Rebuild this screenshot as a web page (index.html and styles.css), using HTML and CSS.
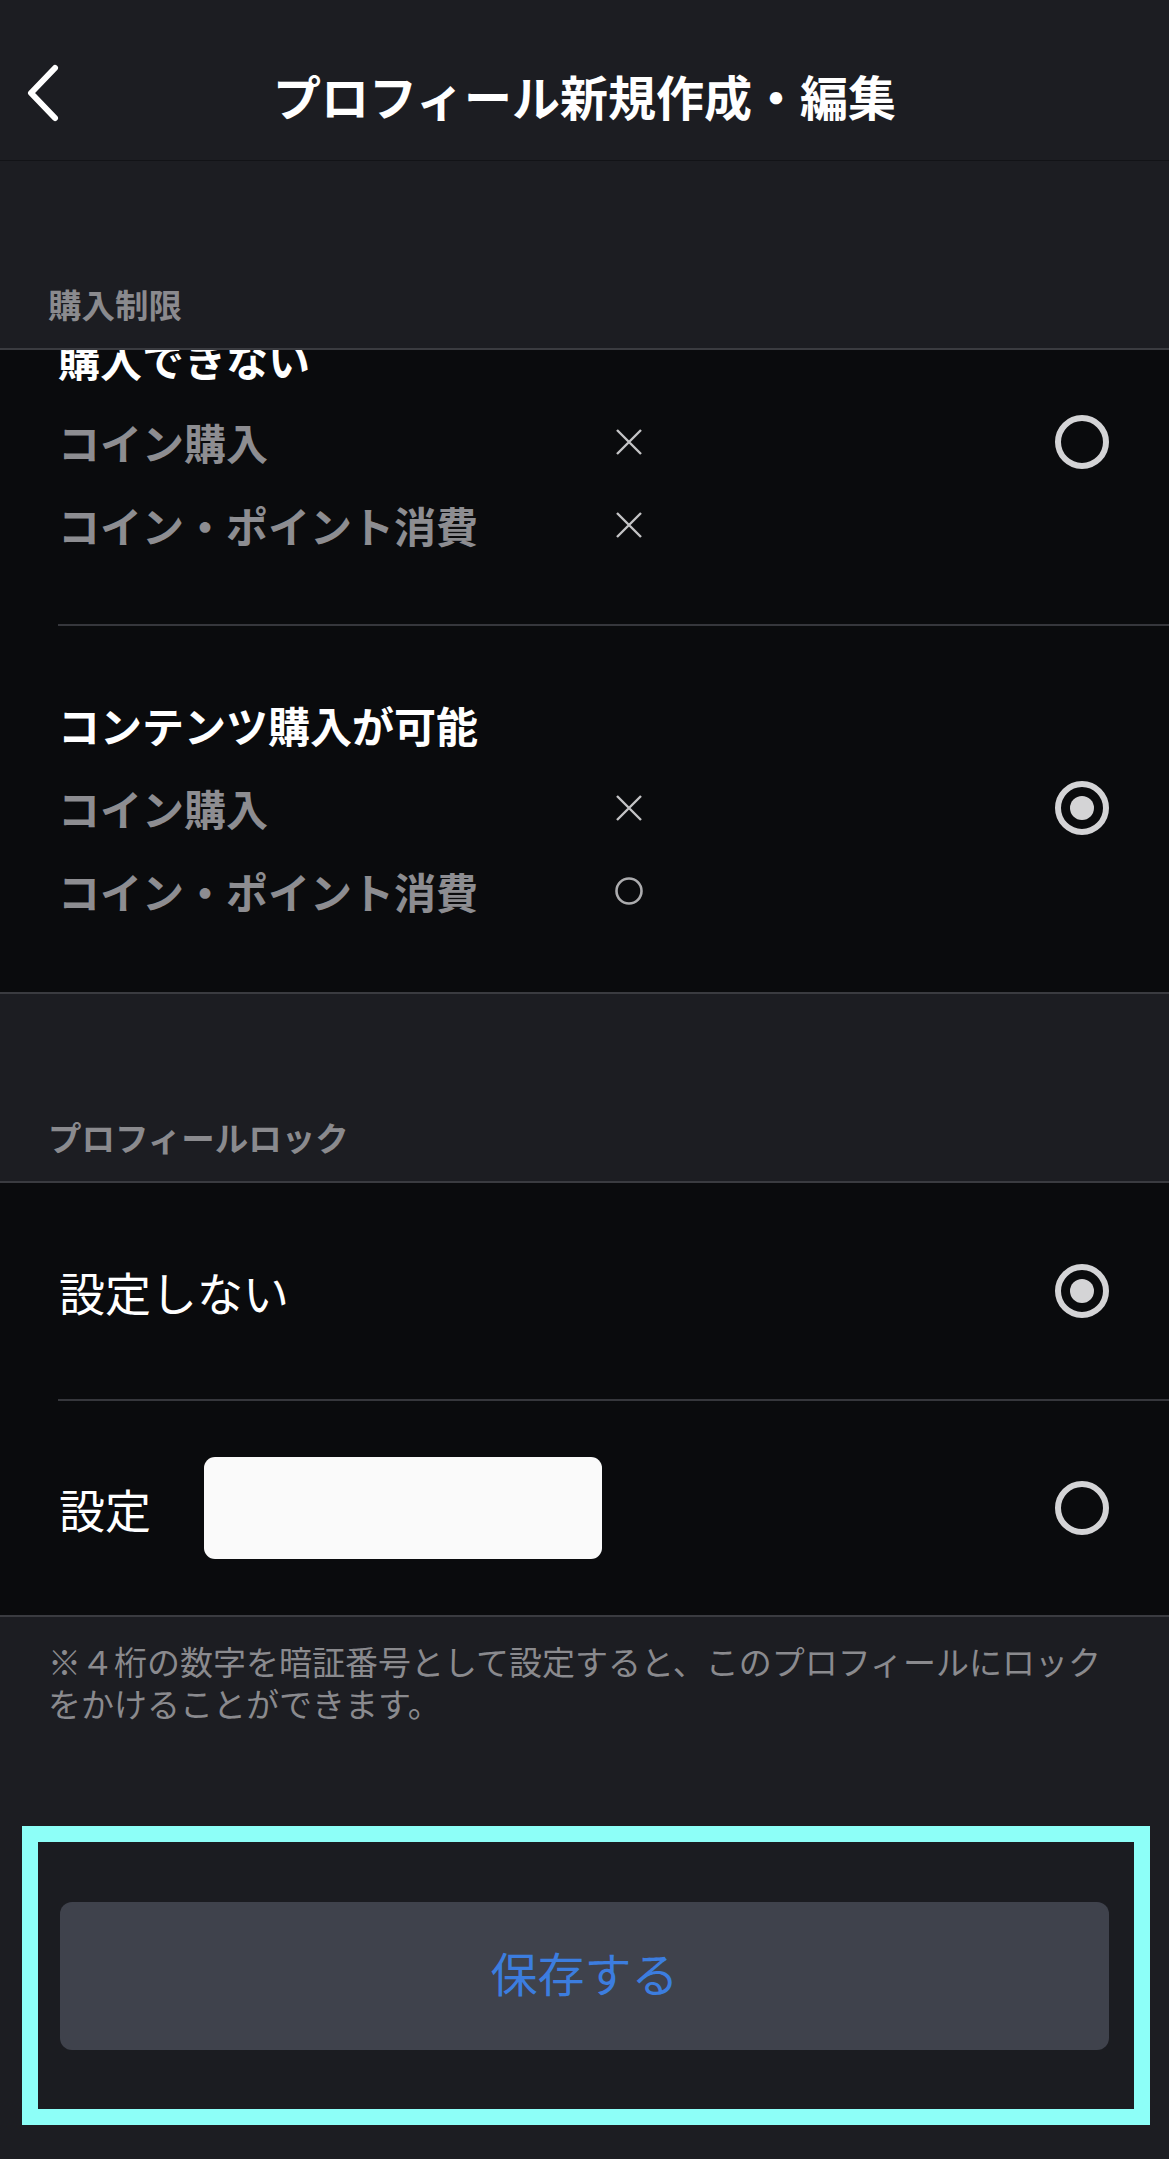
FILE: index.html
```html
<!DOCTYPE html>
<html lang="ja">
<head>
<meta charset="utf-8">
<title>プロフィール新規作成・編集</title>
<link rel="stylesheet" href="styles.css">
</head>
<body>
<header class="topbar">
  <div class="back">
    <svg width="40" height="64" viewBox="0 0 40 64" aria-hidden="true">
      <polyline points="29,5 5,30 29,55" fill="none" stroke="#ffffff" stroke-width="6" stroke-linecap="round" stroke-linejoin="round"/>
    </svg>
  </div>
  <h1 class="title">プロフィール新規作成・編集</h1>
  <div class="spacer"></div>
</header>

<div class="section-label">購入制限</div>
<section class="panel panel-purchase">
  <div class="option option-first">
    <div class="option-body">
      <div class="option-title">購入できない</div>
      <div class="perm-row"><span class="perm-label">コイン購入</span><span class="perm-mark"><svg class="mark" viewBox="0 0 28 28"><path d="M2 2 L26 26 M26 2 L2 26" stroke="#c4c4c6" stroke-width="2.4" fill="none"/></svg></span></div>
      <div class="perm-row"><span class="perm-label">コイン・ポイント消費</span><span class="perm-mark"><svg class="mark" viewBox="0 0 28 28"><path d="M2 2 L26 26 M26 2 L2 26" stroke="#c4c4c6" stroke-width="2.4" fill="none"/></svg></span></div>
    </div>
    <span class="radio"></span>
  </div>
  <div class="divider"></div>
  <div class="option option-second">
    <div class="option-body">
      <div class="option-title">コンテンツ購入が可能</div>
      <div class="perm-row"><span class="perm-label">コイン購入</span><span class="perm-mark"><svg class="mark" viewBox="0 0 28 28"><path d="M2 2 L26 26 M26 2 L2 26" stroke="#c4c4c6" stroke-width="2.4" fill="none"/></svg></span></div>
      <div class="perm-row"><span class="perm-label">コイン・ポイント消費</span><span class="perm-mark"><svg class="mark" viewBox="0 0 28 28"><circle cx="14" cy="14" r="12.5" stroke="#acacae" stroke-width="2.6" fill="none"/></svg></span></div>
    </div>
    <span class="radio radio-on"></span>
  </div>
</section>

<div class="section-label">プロフィールロック</div>
<section class="panel">
  <div class="lock-row lock-row-first">
    <span class="lock-label">設定しない</span>
    <span class="radio radio-on"></span>
  </div>
  <div class="divider"></div>
  <div class="lock-row">
    <span class="lock-label lock-label-short">設定</span>
    <span class="pin-input"></span>
    <span class="radio"></span>
  </div>
</section>

<p class="note">※４桁の数字を暗証番号として設定すると、このプロフィールにロック<br>をかけることができます。</p>

<div class="footer">
  <button class="save" type="button">保存する</button>
</div>
</body>
</html>
```

FILE: styles.css
```css
* {
  box-sizing: border-box;
}

html, body {
  margin: 0;
  padding: 0;
}

body {
  background: #1c1d22;
  font-family: "Noto Sans CJK JP", "Noto Sans", sans-serif;
  color: #ffffff;
  width: 1169px;
}

.topbar {
  height: 161px;
  padding-top: 30px;
  display: grid;
  grid-template-columns: 110px 1fr 110px;
  align-items: center;
  border-bottom: 1px solid #121317;
}

.back {
  display: flex;
  align-items: center;
  padding-left: 26px;
  height: 130px;
}

.back svg {
  display: block;
}

.title {
  margin: 0;
  text-align: center;
  font-size: 48px;
  font-weight: 700;
  line-height: 130px;
  letter-spacing: 0;
  color: #ffffff;
}

.section-label {
  height: 187px;
  display: flex;
  align-items: flex-end;
  padding: 0 48px 27px;
  font-size: 33.5px;
  font-weight: 700;
  line-height: 34px;
  color: #8a8a8e;
}

.panel {
  background: #0a0b0d;
  border-top: 2px solid #3a3b40;
  border-bottom: 2px solid #3a3b40;
  overflow: hidden;
}

.option {
  display: flex;
  align-items: center;
  padding: 57px 60px 58px 58px;
}

.option-first {
  margin-top: -90px;
}

.option-second {
  padding-bottom: 60px;
}

.option-body {
  flex: 1;
}

.option-title {
  font-size: 42px;
  font-weight: 700;
  line-height: 83px;
  color: #ffffff;
}

.perm-row {
  display: flex;
  align-items: center;
  height: 83px;
}

.perm-label {
  width: 557px;
  font-size: 42px;
  font-weight: 700;
  color: #8d8d91;
}

.perm-mark {
  display: flex;
  align-items: center;
}

.mark {
  width: 28px;
  height: 28px;
  display: block;
}

.divider {
  height: 2px;
  margin-left: 58px;
  background: #36373c;
}

.radio {
  width: 54px;
  height: 54px;
  border-radius: 50%;
  border: 6px solid #d4d4d6;
  flex: none;
  display: flex;
  align-items: center;
  justify-content: center;
}

.radio-on::after {
  content: "";
  width: 24px;
  height: 24px;
  border-radius: 50%;
  background: #d4d4d6;
}

.lock-row {
  display: flex;
  align-items: center;
  height: 214px;
  padding: 0 60px 0 59px;
}

.lock-row-first {
  height: 216px;
}

.lock-label {
  font-size: 46px;
  font-weight: 400;
  color: #ffffff;
  flex: 1;
}

.lock-label-short {
  flex: none;
  width: 145px;
}

.pin-input {
  width: 398px;
  height: 102px;
  background: #fafafa;
  border-radius: 11px;
  margin-right: auto;
}

.note {
  margin: 0;
  padding: 23px 48px 0;
  font-size: 33px;
  line-height: 42px;
  color: #8a8a8e;
  font-weight: 400;
}

.footer {
  margin: 102px 19px 36px 22px;
  border: 16px solid #8dfff8;
  padding: 60px 25px 59px 22px;
  background: #1b1c21;
}

.save {
  display: block;
  width: 100%;
  height: 148px;
  border: none;
  border-radius: 12px;
  background: #3f424c;
  color: #3c7ddf;
  font-family: "Noto Sans CJK JP", "Noto Sans", sans-serif;
  font-size: 47px;
  font-weight: 400;
  padding: 0 0 10px;
}
```
